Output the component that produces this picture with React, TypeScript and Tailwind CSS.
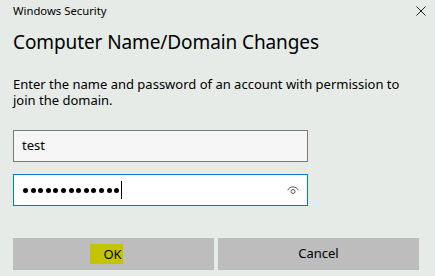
import React from 'react';

const font = { fontFamily: '"Segoe UI", "Noto Sans", "Open Sans", sans-serif' };

const App: React.FC = () => {
  const dots = Array.from({ length: 13 });
  return (
    <div className="w-[435px] h-[276px] bg-[#e6ebe7] text-[#000] overflow-hidden" style={font}>
      {/* title bar */}
      <div className="flex items-start justify-between pl-[13px] pr-[9px] pt-[3px] h-[24px]">
        <span className="text-[11.3px] leading-[16px]">Windows Security</span>
        <svg width="10" height="10" viewBox="0 0 10 10" className="mt-[3px]">
          <path d="M0.5 0.5 L9.5 9.5 M9.5 0.5 L0.5 9.5" stroke="#222" strokeWidth="1" fill="none" />
        </svg>
      </div>

      <div className="px-[13px]">
        <h1 className="text-[19px] leading-[28px] mt-[4px] tracking-[-0.1px]">Computer Name/Domain Changes</h1>

        <p className="text-[13px] leading-[16px] mt-[20px] w-[400px]">
          Enter the name and password of an account with permission to join the domain.
        </p>

        <div className="mt-[22px] w-[295px] h-[32px] border border-[#7a7a7a] bg-[#f6f6f6] flex items-center px-[8px] text-[13px]">
          test
        </div>

        <div className="mt-[12px] w-[295px] h-[32px] border border-[#0078d7] bg-white flex items-center pl-[9px] pr-[8px]">
          <div className="flex gap-[2.6px]">
            {dots.map((_, i) => (
              <span key={i} className="w-[5px] h-[5px] rounded-full bg-black" />
            ))}
          </div>
          <span className="ml-[2px] w-[1px] h-[18px] bg-black" />
          <span className="flex-1" />
          <svg width="12" height="10" viewBox="0 0 12 10">
            <path d="M0.8 5.2 C2.5 0.8 9.5 0.8 11.2 5.2" stroke="#555" strokeWidth="1" fill="none" />
            <circle cx="6" cy="6.5" r="2" stroke="#555" strokeWidth="1" fill="none" />
          </svg>
        </div>

        <div className="mt-[32px] flex gap-[4px] w-[406px]">
          <button className="w-[201px] h-[32px] bg-[#bdbdbd] flex items-center justify-center text-[13px]">
            <span className="bg-[#c3c300] pl-[13px] pr-[1px] leading-[20px] ml-[-14px]">OK</span>
          </button>
          <button className="w-[201px] h-[32px] bg-[#bdbdbd] flex items-center justify-center text-[13px]">
            Cancel
          </button>
        </div>
      </div>
    </div>
  );
};

export default App;
